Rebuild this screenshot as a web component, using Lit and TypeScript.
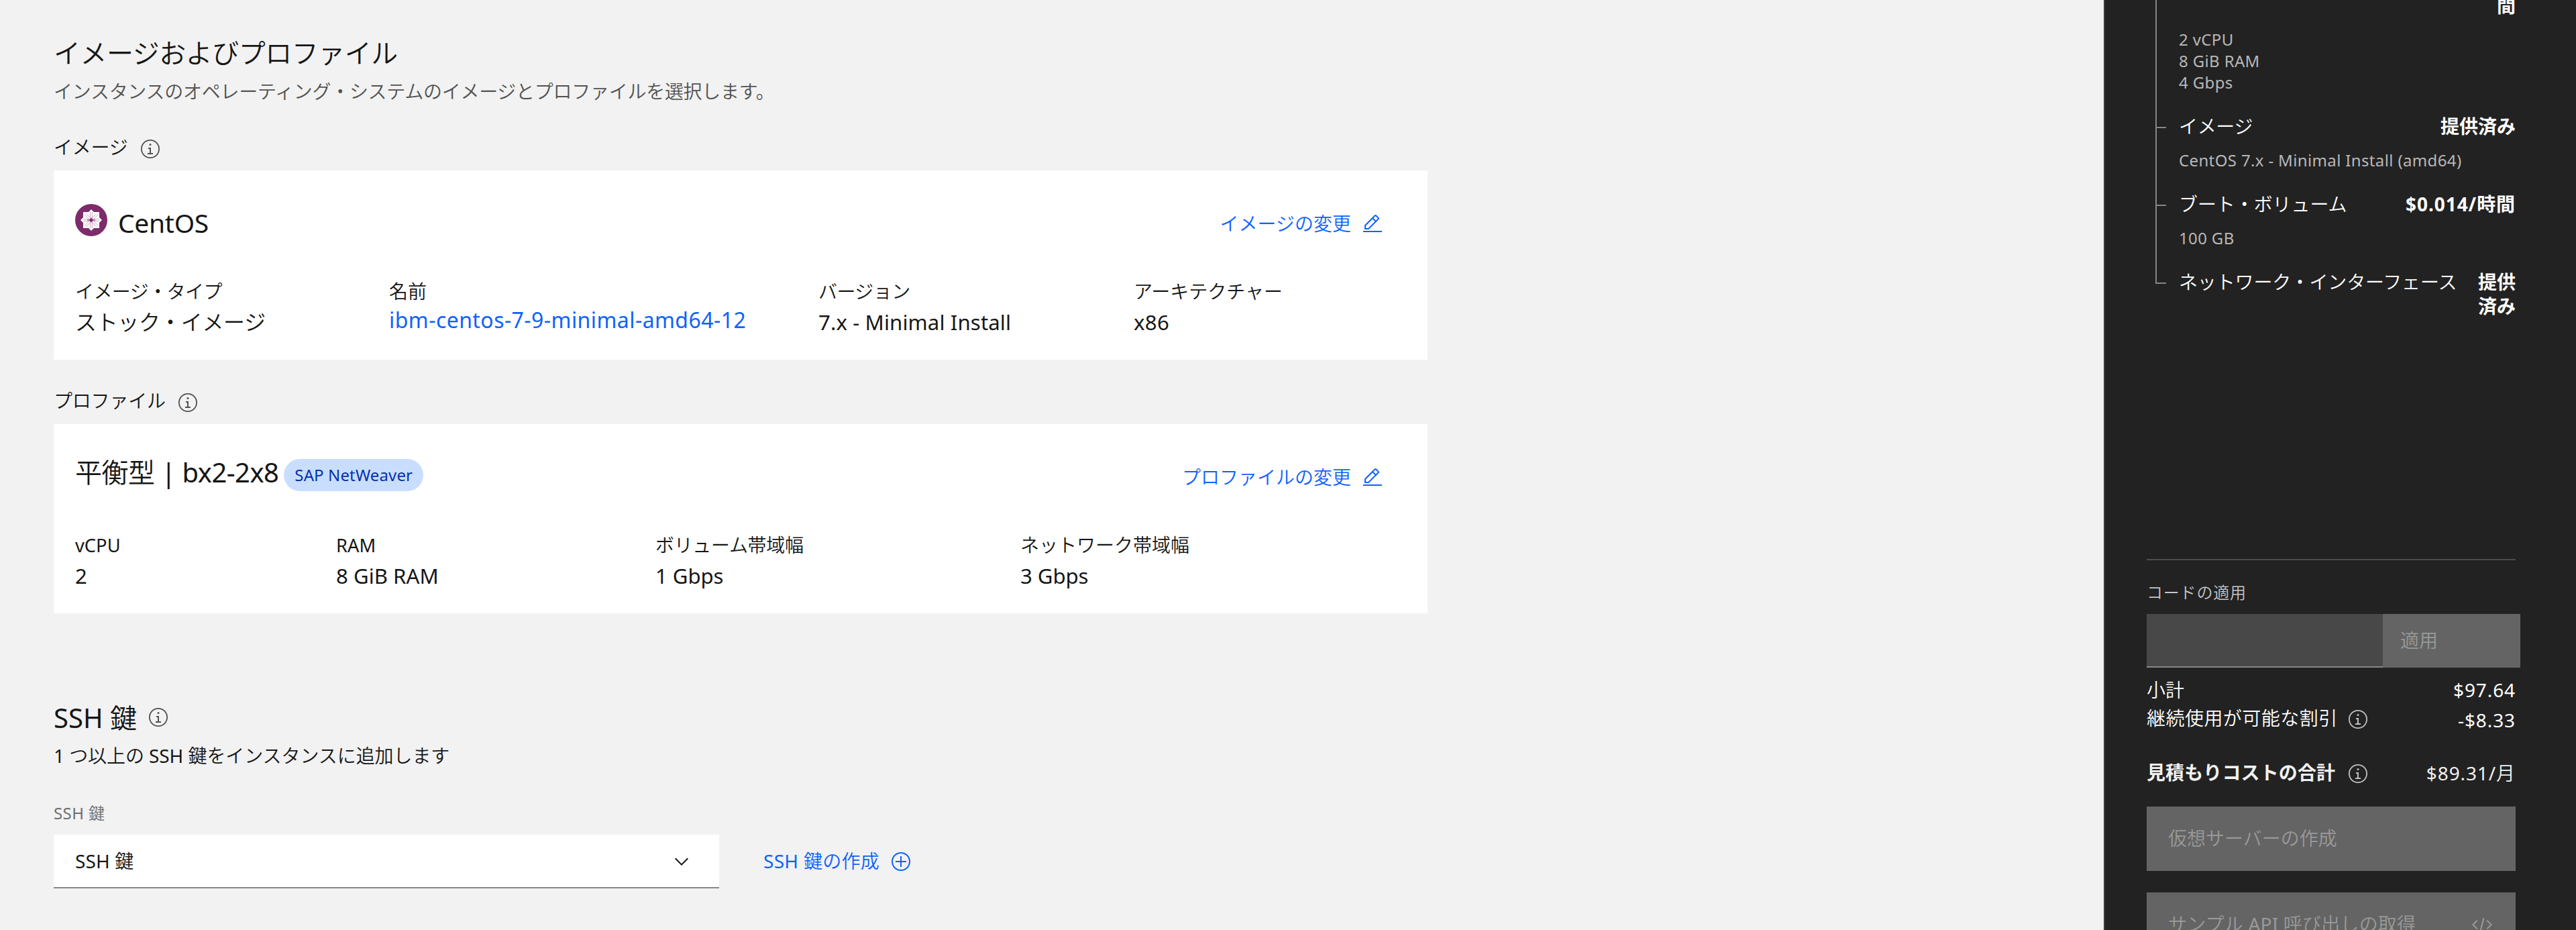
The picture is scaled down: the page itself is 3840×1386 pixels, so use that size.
import { LitElement, html, css, svg, nothing, type TemplateResult } from "lit";
import { customElement } from "lit/decorators.js";

const ICONS = {
  info: svg`<path d="M17 22V14H13V16H15V22H12V24H20V22H17z"/><circle cx="16" cy="9.5" r="1.5"/><circle cx="16" cy="16" r="13.1" fill="none" stroke="currentColor" stroke-width="1.8"/>`,
  edit: svg`<path d="M2 26H30V28H2zM25.4 9c.8-.8.8-2 0-2.8l-3.6-3.6c-.8-.8-2-.8-2.8 0l-15 15V24h6.4L25.4 9zM20.4 4L24 7.6l-3 3L17.4 7 20.4 4zM6 22v-3.6l10-10 3.6 3.6-10 10H6z"/>`,
  add: svg`<circle cx="16" cy="16" r="13" fill="none" stroke="currentColor" stroke-width="2"/><path d="M24 15H17V8H15V15H8V17H15V24H17V17H24z"/>`,
  chevron: svg`<path d="M16 22L6 12 7.4 10.6 16 19.2 24.6 10.6 26 12z"/>`,
  code: svg`<path d="M31 16l-7 7-1.41-1.41L28.17 16l-5.58-5.59L24 9l7 7zM1 16l7-7 1.41 1.41L3.83 16l5.58 5.59L8 23l-7-7zM12.42 25.484L17.64 6l1.932.517L14.352 26z"/>`,
};

const icon = (name: keyof typeof ICONS, cls = "") =>
  html`<svg class="icon ${cls}" viewBox="0 0 32 32" width="32" height="32" fill="currentColor">${ICONS[name]}</svg>`;

const centosLogo = html`<svg class="logo" viewBox="0 0 48 48" width="48" height="48">
  <circle cx="24" cy="24" r="24" fill="#7d2b6a" />
  <rect x="12" y="12" width="24" height="24" fill="#fff" />
  <path d="M24 8L40 24 24 40 8 24z" fill="#fff" />
  <g fill="none" stroke="#c79bbd" stroke-width="0.9">
    <path d="M22.6 12V36M25.4 12V36M12 22.6H36M12 25.4H36" />
    <path d="M14 16L22 24L14 32M34 16L26 24L34 32M16 14L24 22L32 14M16 34L24 26L32 34" />
  </g>
  <path d="M24 20.5V27.5M18 24H30" stroke="#7d2b6a" stroke-width="1" />
  <rect x="22" y="22" width="4" height="4" fill="#7d2b6a" />
</svg>`;

interface Field { label: string; labelCls?: string; value: string; valueCls?: string; link?: boolean }

const IMAGE_FIELDS: Field[] = [
  { label: "イメージ・タイプ", labelCls: "n5", value: "ストック・イメージ", valueCls: "n3" },
  { label: "名前", value: "ibm-centos-7-9-minimal-amd64-12", valueCls: "p4", link: true },
  { label: "バージョン", labelCls: "n5", value: "7.x - Minimal Install", valueCls: "latin p1" },
  { label: "アーキテクチャー", value: "x86", valueCls: "latin p3" },
];

const PROFILE_FIELDS: Field[] = [
  { label: "vCPU", labelCls: "latin-sm", value: "2", valueCls: "latin" },
  { label: "RAM", labelCls: "latin-sm", value: "8 GiB RAM", valueCls: "latin" },
  { label: "ボリューム帯域幅", labelCls: "n3", value: "1 Gbps", valueCls: "latin n1" },
  { label: "ネットワーク帯域幅", value: "3 Gbps", valueCls: "latin n1" },
];

interface CostItem { name: string; nameCls?: string; price: string; priceCls?: string; details: string[] }

const COSTS: CostItem[] = [
  { name: "イメージ", nameCls: "n3", price: "提供済み", details: ["CentOS 7.x - Minimal Install (amd64)"] },
  { name: "ブート・ボリューム", nameCls: "n1", price: "$0.014/時間", priceCls: "p9", details: ["100 GB"] },
  { name: "ネットワーク・インターフェース", nameCls: "n2", price: "提供済み", priceCls: "narrow", details: [] },
];

@customElement("app-root")
export class AppRoot extends LitElement {
  static styles = css`
    :host {
      display: block;
      font-family: "Noto Sans", "Noto Sans CJK JP DemiLight", "Noto Sans CJK JP", sans-serif;
      font-size: 28px;
      color: #161616;
    }
    * { box-sizing: border-box; }
    .page { display: flex; height: 1386px; overflow: hidden; background: #f2f2f2; white-space: nowrap; }
    .main { flex: 1; padding: 55px 0 0 80px; }
    h2, p { margin: 0; padding: 0; font-weight: 400; }
    .icon, .logo { display: block; flex: none; }
    .info { color: #525252; }
    .n5 { letter-spacing: -0.57px; }
    .n3 { letter-spacing: -0.32px; }
    .n2 { letter-spacing: -0.14px; }
    .n1 { letter-spacing: -0.08px; }
    .p1 { letter-spacing: 0.1px; }
    .p3 { letter-spacing: 0.3px; }
    .p4 { letter-spacing: 0.43px; }
    .p9 { letter-spacing: 0.93px; }

    .title { display: flex; align-items: center; font-size: 40px; line-height: 48px; }
    .title.first { letter-spacing: -0.5px; }
    .title .icon { margin: -2px 0 0 16px; }
    .ssh-title { margin-top: 132px; }
    .desc { margin-top: 12px; line-height: 40px; }
    .desc.muted { margin-top: 13px; color: #525252; letter-spacing: -0.27px; }

    .section-label { display: flex; align-items: center; gap: 17px; height: 32px; margin-top: 48px; line-height: 32px; }
    .section-label span { padding-bottom: 7px; letter-spacing: -0.2px; }
    .section-label.first { margin-top: 50px; }

    .card { width: 2048px; height: 282px; margin-top: 16px; padding: 50px 66px 0 32px; background: #fff; }
    .card-head { display: flex; align-items: center; height: 48px; }
    .card-name { font-size: 40px; line-height: 48px; }
    .card-name.os { padding-top: 8px; margin-left: 16px; font-size: 39px; letter-spacing: -0.3px; }
    .card-name.profile { padding-bottom: 4px; letter-spacing: -0.55px; }
    .tag {
      height: 48px; margin: 4px 0 0 8px; padding: 0 16px; border-radius: 24px;
      background: #c9deff; color: #0530ad; font-size: 24px; line-height: 47px; letter-spacing: 0.12px;
    }
    .link { display: flex; align-items: center; gap: 16px; color: #0f62fe; line-height: 32px; }
    .link span { padding-bottom: 2px; }
    .card-head .link { margin: 12px 0 0 auto; }
    .fields { display: grid; margin-top: 66px; }
    .fields.image { grid-template-columns: 468px 640px 470px 1fr; }
    .fields.profile { grid-template-columns: 389px 476px 544px 1fr; }
    .field { display: flex; flex-direction: column; gap: 14px; line-height: 32px; }
    .field .latin-sm { font-size: 27.3px; margin: 1px 0 -1px; }
    .field .value { font-size: 32px; }
    .field .value.latin { font-size: 31.2px; }
    .field .value.anchor { color: #0f62fe; margin-top: -3px; }

    .input-label { margin-top: 50px; font-size: 24px; line-height: 32px; color: #6f6f6f; }
    .ssh-row { display: flex; align-items: center; gap: 66px; margin-top: 16px; }
    .select {
      display: flex; align-items: center; justify-content: space-between; width: 992px; height: 80px;
      padding: 2px 40px 0 32px; background: #fff; border-bottom: 2px solid #868686;
    }
    .select span { padding-bottom: 4px; }

    .side { width: 704px; padding: 0 0 0 62px; background: #222; border-left: 2px solid #3d3d3d; color: #fff; }
    .tree { display: flex; height: 833px; margin-left: 13px; overflow: hidden; }
    .rail { flex: none; width: 2px; height: 423px; background: #868686; }
    .items { width: 535px; }
    .item { margin-bottom: 31px; }
    .cost { display: flex; line-height: 36px; }
    .cost.clipped { height: 36px; margin-top: -10px; justify-content: flex-end; }
    .tick { flex: none; width: 14px; height: 2px; margin: 19px 19px 0 0; background: #868686; }
    .price { margin-left: auto; text-align: right; }
    .price.narrow { width: 56px; white-space: normal; word-break: break-all; }
    .price, .cost.clipped, .total .name { font-family: "Noto Sans", "Noto Sans CJK JP", sans-serif; font-weight: 700; }
    .details { margin: 17px 0 0 33px; font-size: 24px; line-height: 32px; color: #b8b8b8; letter-spacing: 0.36px; }

    .summary { width: 550px; border-top: 2px solid #4c4c4c; }
    .code-label { margin-top: 32px; font-size: 24px; line-height: 32px; color: #c6c6c6; letter-spacing: 0.8px; }
    .code { display: flex; width: 557px; height: 80px; margin-top: 16px; }
    .code-input { width: 352px; background: #484848; border-bottom: 2px solid #868686; }
    .code-apply { flex: 1; padding-left: 26px; background: #646464; color: #999; line-height: 78px; }
    .line { display: flex; align-items: center; height: 36px; line-height: 36px; }
    .line .name { width: 299px; }
    .line .amount { margin-left: auto; letter-spacing: 0.9px; }
    .line .icon { color: #c0c0c0; }
    .subtotal { margin-top: 15px; }
    .discount { margin-top: 8px; }
    .discount .name { padding-bottom: 4px; letter-spacing: 0.46px; }
    .discount .amount { padding-top: 2px; }
    .total { margin-top: 45px; color: #f1f1f1; }
    .total .name { padding-bottom: 4px; letter-spacing: 0.11px; }
    .total .amount { padding-bottom: 3px; }
    .button {
      display: flex; align-items: center; justify-content: space-between; width: 550px; height: 96px;
      padding: 0 34px 0 32px; background: #646464; color: #999;
    }
    .button span { padding-bottom: 4px; }
    .create { margin-top: 31px; }
    .sample { margin-top: 32px; letter-spacing: 0.2px; }
  `;

  private card(head: TemplateResult, editText: string, kind: string, fields: Field[]) {
    return html`<section class="card">
      <div class="card-head">
        ${head}
        <a class="link"><span>${editText}</span>${icon("edit")}</a>
      </div>
      <div class="fields ${kind}">
        ${fields.map(
          (f) => html`<div class="field">
            <span class="label ${f.labelCls ?? ""}">${f.label}</span>
            <span class="value ${f.valueCls ?? ""} ${f.link ? "anchor" : ""}">${f.value}</span>
          </div>`
        )}
      </div>
    </section>`;
  }

  render() {
    return html`<div class="page">
      <main class="main">
        <h2 class="title first">イメージおよびプロファイル</h2>
        <p class="desc muted">インスタンスのオペレーティング・システムのイメージとプロファイルを選択します。</p>

        <div class="section-label first"><span>イメージ</span>${icon("info", "info")}</div>
        ${this.card(html`${centosLogo}<span class="card-name os">CentOS</span>`, "イメージの変更", "image", IMAGE_FIELDS)}

        <div class="section-label"><span>プロファイル</span>${icon("info", "info")}</div>
        ${this.card(
          html`<span class="card-name profile">平衡型 | bx2-2x8</span><span class="tag">SAP NetWeaver</span>`,
          "プロファイルの変更", "profile", PROFILE_FIELDS
        )}

        <h2 class="title ssh-title"><span>SSH 鍵</span>${icon("info", "info")}</h2>
        <p class="desc n1">1 つ以上の SSH 鍵をインスタンスに追加します</p>
        <div class="input-label p4">SSH 鍵</div>
        <div class="ssh-row">
          <div class="select"><span class="p1">SSH 鍵</span>${icon("chevron")}</div>
          <a class="link"><span class="p3">SSH 鍵の作成</span>${icon("add")}</a>
        </div>
      </main>

      <aside class="side">
        <div class="tree">
          <div class="rail"></div>
          <div class="items">
            <div class="item">
              <div class="cost clipped">間</div>
              <div class="details"><div>2 vCPU</div><div>8 GiB RAM</div><div>4 Gbps</div></div>
            </div>
            ${COSTS.map(
              (c) => html`<div class="item">
                <div class="cost">
                  <i class="tick"></i>
                  <span class="${c.nameCls ?? ""}">${c.name}</span>
                  <span class="price ${c.priceCls ?? ""}">${c.price}</span>
                </div>
                ${c.details.length ? html`<div class="details">${c.details.map((d) => html`<div>${d}</div>`)}</div>` : nothing}
              </div>`
            )}
          </div>
        </div>
        <div class="summary">
          <div class="code-label">コードの適用</div>
          <div class="code"><div class="code-input"></div><div class="code-apply">適用</div></div>
          <div class="line subtotal"><span class="name">小計</span><span class="amount">$97.64</span></div>
          <div class="line discount">
            <span class="name">継続使用が可能な割引</span>${icon("info")}<span class="amount">-$8.33</span>
          </div>
          <div class="line total">
            <span class="name">見積もりコストの合計</span>${icon("info")}<span class="amount">$89.31/月</span>
          </div>
          <div class="button create"><span>仮想サーバーの作成</span></div>
          <div class="button sample"><span>サンプル API 呼び出しの取得</span>${icon("code")}</div>
        </div>
      </aside>
    </div>`;
  }
}
